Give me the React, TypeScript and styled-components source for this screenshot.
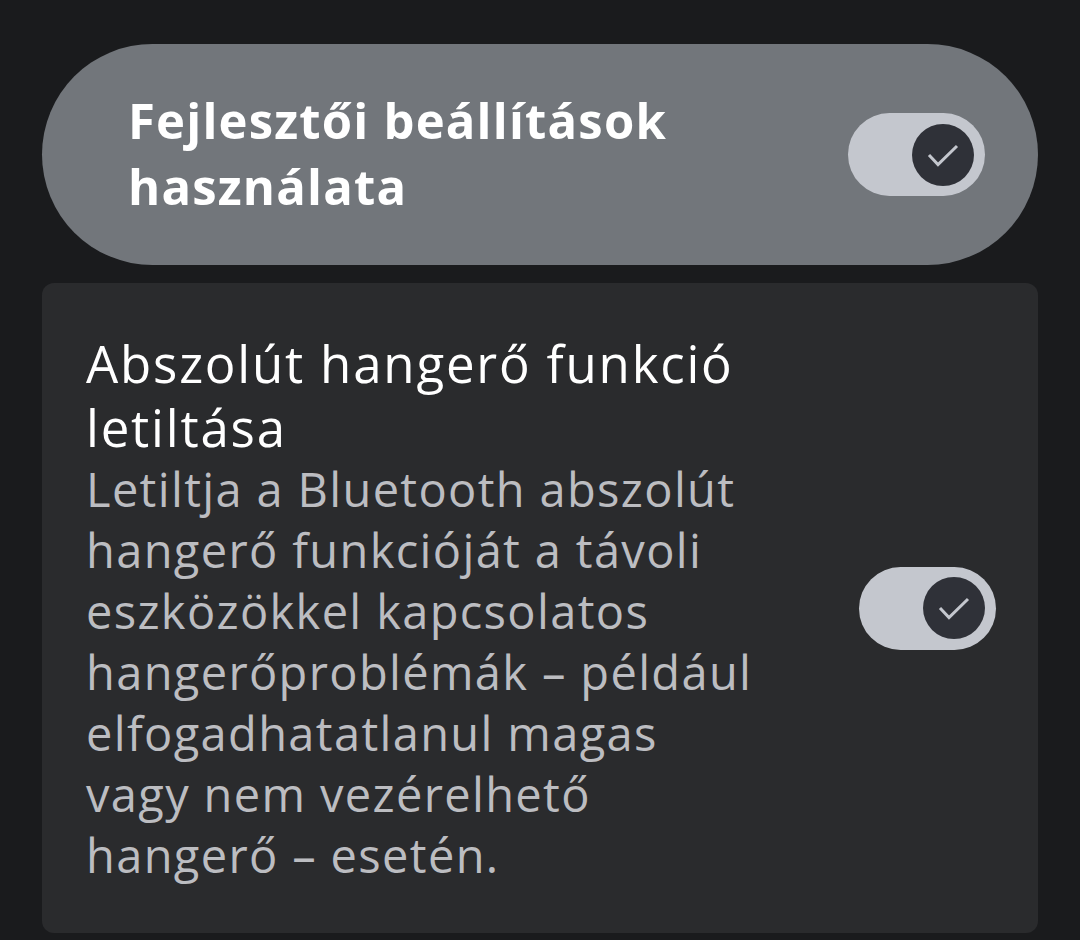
import React from "react";
import styled, { createGlobalStyle } from "styled-components";

const Global = createGlobalStyle`
  html, body { margin: 0; padding: 0; background: #1a1b1d; }
  body { font-family: "Open Sans", "Noto Sans", sans-serif; -webkit-font-smoothing: antialiased; }
`;

const Page = styled.div`
  width: 1080px;
  height: 940px;
  overflow: hidden;
  box-sizing: border-box;
  padding: 44px 42px 0 42px;
  display: flex;
  flex-direction: column;
  gap: 18px;
  background: #1a1b1d;
`;

const MainPill = styled.div`
  height: 221px;
  flex-shrink: 0;
  border-radius: 111px;
  background: #72767b;
  display: flex;
  align-items: center;
  justify-content: space-between;
  padding: 0 53px 0 86px;
  box-sizing: border-box;
`;

const PillTitle = styled.div`
  color: #ffffff;
  font-weight: 700;
  font-size: 49px;
  letter-spacing: 1.2px;
  line-height: 66px;
  margin-top: -4px;
`;

const Card = styled.div<{ $h: number }>`
  height: ${(p) => p.$h}px;
  flex-shrink: 0;
  border-radius: 12px;
  background: #2a2b2d;
  display: flex;
  align-items: center;
  justify-content: space-between;
  padding: 0 42px 0 44px;
  box-sizing: border-box;
`;

const TextCol = styled.div`
  display: flex;
  flex-direction: column;
`;

const ItemTitle = styled.div`
  color: #ffffff;
  font-size: 51px;
  letter-spacing: 1.8px;
  line-height: 64px;
`;

const ItemDesc = styled.div`
  color: #bcbdc1;
  font-size: 47px;
  letter-spacing: 1.35px;
  line-height: 61px;
`;

const Track = styled.div`
  width: 137px;
  height: 83px;
  border-radius: 42px;
  background: #c4c7ce;
  display: flex;
  align-items: center;
  justify-content: flex-end;
  padding-right: 11px;
  box-sizing: border-box;
  flex-shrink: 0;
`;

const Thumb = styled.div`
  width: 62px;
  height: 62px;
  border-radius: 50%;
  background: #2f3138;
  display: flex;
  align-items: center;
  justify-content: center;
`;

const Switch = () => (
  <Track>
    <Thumb>
      <svg width="40" height="40" viewBox="0 0 40 40">
        <path d="M6 20 L15 29.5 L34 11" fill="none" stroke="#c4c7ce" strokeWidth="3" strokeLinecap="butt" strokeLinejoin="miter" />
      </svg>
    </Thumb>
  </Track>
);

export default function App() {
  return (
    <>
      <Global />
      <Page>
        <MainPill>
          <PillTitle>
            Fejlesztői beállítások
            <br />
            használata
          </PillTitle>
          <Switch />
        </MainPill>
        <Card $h={650}>
          <TextCol>
            <ItemTitle>
              Abszolút hangerő funkció
              <br />
              letiltása
            </ItemTitle>
            <ItemDesc>
              Letiltja a Bluetooth abszolút
              <br />
              hangerő funkcióját a távoli
              <br />
              eszközökkel kapcsolatos
              <br />
              hangerőproblémák – például
              <br />
              elfogadhatatlanul magas
              <br />
              vagy nem vezérelhető
              <br />
              hangerő – esetén.
            </ItemDesc>
          </TextCol>
          <Switch />
        </Card>
        <Card $h={60} />
      </Page>
    </>
  );
}
